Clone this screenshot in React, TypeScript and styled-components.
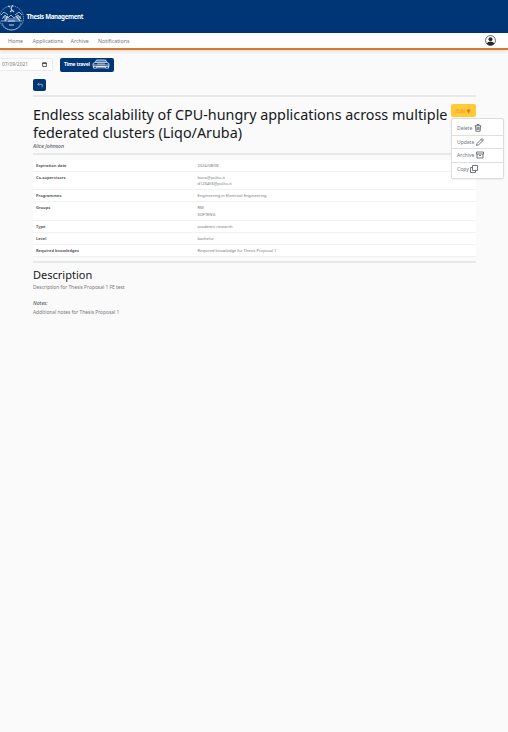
import React from "react";
import styled, { createGlobalStyle } from "styled-components";

const GlobalStyle = createGlobalStyle`
  * { box-sizing: border-box; }
  body {
    margin: 0;
    background: #fafafa;
    color: #74777a;
    font: 5px/6px "Noto Sans", sans-serif;
    overflow: hidden;
  }
`;

const Page = styled.div`
  width: 508px;
  height: 732px;
  overflow: hidden;
`;

const Header = styled.header`
  display: flex;
  align-items: center;
  height: 33px;
  background: #003576;
  color: #fff;
`;

const Brand = styled.span`
  margin-left: 1.5px;
  font-size: 6.2px;
  font-weight: 700;
  letter-spacing: -0.33px;
  line-height: 10px;
`;

const Nav = styled.nav`
  display: flex;
  align-items: center;
  height: 17px;
  padding: 0 12px 0 8px;
  background: #fff;
  border-bottom: 2px solid #d9772b;
  box-shadow: 0 1px 4px rgba(0, 0, 0, 0.15);
`;

const NavLink = styled.a<{ $width: number }>`
  width: ${(p) => p.$width}px;
  font-size: 5.3px;
  line-height: 8px;
  white-space: nowrap;
`;

const Avatar = styled.svg`
  width: 11px;
  height: 11px;
  margin-left: auto;
`;

const TimeBar = styled.div`
  display: flex;
  align-items: center;
  gap: 7px;
  margin-top: 7px;
  height: 15px;
`;

const DateField = styled.div`
  display: flex;
  align-items: center;
  justify-content: space-between;
  width: 53px;
  height: 13px;
  padding: 0 5px 1px 2px;
  background: #fff;
  border: 1px solid #e8eaec;
  border-left: 0;
  border-radius: 0 2px 2px 0;
  font-size: 4.9px;
`;

const TravelButton = styled.button`
  display: flex;
  align-items: center;
  justify-content: space-between;
  width: 54px;
  height: 14px;
  padding: 0 4px 1px;
  border: 0;
  border-radius: 2px;
  background: #003576;
  color: #fff;
  font: 700 5px/8px "Noto Sans", sans-serif;
  letter-spacing: -0.22px;
  white-space: nowrap;
  svg { flex: none; }
`;

const Content = styled.main`
  padding: 7px 32px 0 33px;
`;

const BackButton = styled.button`
  display: flex;
  align-items: center;
  justify-content: center;
  width: 13px;
  height: 12px;
  padding: 0;
  border: 0;
  border-radius: 2px;
  background: #003576;
`;

const Rule = styled.hr<{ $gap: number }>`
  height: 2px;
  margin: ${(p) => p.$gap}px 0 0;
  border: 0;
  background: #e7e8e8;
`;

const TitleRow = styled.div`
  display: flex;
  align-items: flex-start;
  justify-content: space-between;
  margin-top: 7px;
`;

const Title = styled.h1`
  margin: 2px 0 0;
  color: #15181b;
  font-size: 14.35px;
  font-weight: 400;
  line-height: 18px;
  white-space: nowrap;
`;

const EditAnchor = styled.div`
  position: relative;
  width: 25px;
`;

const EditButton = styled.button`
  display: flex;
  align-items: center;
  justify-content: center;
  gap: 1.5px;
  width: 25px;
  height: 13px;
  padding: 0;
  border: 0;
  border-radius: 2px;
  background: #ffca38;
  color: #f98e2b;
  font: 5px/8px "Noto Sans", sans-serif;
`;

const Caret = styled.span`
  font: 5.5px/8px "DejaVu Sans", sans-serif;
  color: #f5701c;
`;

const Menu = styled.div`
  position: absolute;
  top: 14px;
  left: 0;
  width: 53px;
  height: 61px;
  padding: 2px 0 4px;
  background: #fff;
  border: 1px solid #dcdddd;
  border-radius: 2px;
  box-shadow: 0 1px 2px rgba(0, 0, 0, 0.06);
`;

const MenuItem = styled.div`
  display: flex;
  align-items: center;
  gap: 1.5px;
  height: 13.5px;
  padding-left: 5px;
  font-size: 5px;
  & + & { border-top: 1px solid #dedfdf; }
  svg { width: 8px; height: 8px; }
`;

const Author = styled.div`
  margin-top: 1px;
  color: #595c60;
  font-size: 5.2px;
  font-style: italic;
  font-weight: 500;
  line-height: 6px;
`;

const Details = styled.dl`
  margin: 5px 0 0;
`;

const DetailRow = styled.div<{ $height: number }>`
  display: grid;
  grid-template-columns: 161.5px 1fr;
  height: ${(p) => p.$height}px;
  padding: 3px 3px 0;
  background: #fff;
  border-bottom: 1px solid #f0f1f1;
  font-size: 4px;
`;

const Term = styled.dt`
  color: #5b5e62;
  font-weight: 700;
`;

const Value = styled.dd<{ $line: number }>`
  margin: 0;
  line-height: 6px;
  div + div { margin-top: ${(p) => p.$line - 6}px; }
`;

const SectionTitle = styled.h2`
  margin: 4px 0 0;
  color: #15181b;
  font-size: 11px;
  font-weight: 400;
  line-height: 15px;
`;

const Paragraph = styled.p<{ $top: number }>`
  margin: ${(p) => p.$top}px 0 0;
  font-size: 4.88px;
  line-height: 6px;
`;

const NotesLabel = styled.p`
  margin: 10px 0 0;
  color: #595c60;
  font-size: 5.1px;
  font-style: italic;
  font-weight: 500;
  line-height: 6px;
`;

const Seal = () => (
  <svg width="25" height="29" viewBox="0 0 25 29" fill="none" stroke="#c7d4e5" strokeWidth="0.8">
    <circle cx="11.5" cy="16" r="12" strokeDasharray="1.5 0.7" opacity=".75" />
    <path d="M2 21a10 10 0 0 0 19 0" opacity=".7" />
    <path d="M1 13l3-3 4 3M15 13l4-3 3 3M1 19h21M2 17l3-4 3 3 3-3 3 3 4-3 3 4M4 17h16" />
    <path d="M5 19l3-5M20 19l-4-5M8 19h7M3 15h4M16 15h5" strokeWidth="1.2" />
    <path d="M8 4l2 1M13 3l-2 3 1 3M10 10l2-2 2 2M9 23h5" strokeWidth="1.1" />
  </svg>
);

const Car = () => (
  <svg width="18" height="10" viewBox="0 0 18 10" fill="none" stroke="#fff" strokeWidth=".7">
    <path d="M3 3.5L4.5 1h9L15 3.5M1 4.5l2-1h12l2 1v3H1zM1 6h16M1.5 7.5v1.7h3V7.5M13.5 7.5v1.7h3V7.5M5 7.5h8M4 2h10M5 5h8M5 8.8h8" />
  </svg>
);

const Calendar = () => (
  <svg width="5" height="5" viewBox="0 0 5 5">
    <path d="M.6 1h3.8v3.5H.6z" fill="none" stroke="#222" strokeWidth=".7" />
    <path d="M.4.6h4.2v1H.4z" fill="#222" />
  </svg>
);

const icons = {
  Delete: <path d="M1.5 3.5h13M6 3V1h4v2M3 4l.7 10.5h8.6L13 4M6 6v6M8 6v6M10 6v6" />,
  Update: <path d="M1 15l1-4L12 1l3 3L5 14l-4 1zM10 3l3 3" />,
  Archive: <path d="M1 2h14v4H1zM2 6v8h12V6M6 9h4" />,
  Copy: <path d="M5 1h10v10H5zM5 5H1v10h10v-4" />,
};

const actions: (keyof typeof icons)[] = ["Delete", "Update", "Archive", "Copy"];

const links = [
  { label: "Home", width: 24.5 },
  { label: "Applications", width: 38 },
  { label: "Archive", width: 27.5 },
  { label: "Notifications", width: 40 },
];

const details = [
  { term: "Expiration date", values: ["2024/08/06"], height: 12 },
  { term: "Co-supervisors", values: ["laura@polito.it", "d123456@polito.it"], height: 18 },
  { term: "Programmes", values: ["Engineering in Electrical Engineering"], height: 12 },
  { term: "Groups", values: ["RM", "SOFTENG"], height: 19, line: 7 },
  { term: "Type", values: ["academic research"], height: 12 },
  { term: "Level", values: ["bachelor"], height: 12 },
  { term: "Required knowledges", values: ["Required knowledge for Thesis Proposal 1"], height: 12 },
];

export default function App() {
  return (
    <Page>
      <GlobalStyle />
      <Header>
        <Seal />
        <Brand>Thesis Management</Brand>
      </Header>
      <Nav>
        {links.map((l) => (
          <NavLink key={l.label} $width={l.width}>{l.label}</NavLink>
        ))}
        <Avatar viewBox="0 0 16 16">
          <circle cx="8" cy="8" r="7.2" fill="#fff" stroke="#24272b" strokeWidth="1" />
          <circle cx="8" cy="6" r="2.9" fill="#24272b" />
          <path d="M2.5 12.5Q4 9.5 8 9.5t5.5 3Q11 15.3 8 15.3t-5.5-2.8z" fill="#24272b" />
        </Avatar>
      </Nav>
      <TimeBar>
        <DateField>07/09/2021<Calendar /></DateField>
        <TravelButton>Time travel<Car /></TravelButton>
      </TimeBar>
      <Content>
        <BackButton aria-label="Back">
          <svg width="6" height="6" viewBox="0 0 6 6" fill="none" stroke="#b8c8dc" strokeWidth=".7">
            <path d="M2.3.8L.8 2.3l1.5 1.5M.8 2.3h4.4v3" />
          </svg>
        </BackButton>
        <Rule $gap={4} />
        <TitleRow>
          <Title>
            Endless scalability of CPU-hungry applications across multiple
            <br />
            federated clusters (Liqo/Aruba)
          </Title>
          <EditAnchor>
            <EditButton>Edit<Caret>▼</Caret></EditButton>
            <Menu>
              {actions.map((name) => (
                <MenuItem key={name}>
                  {name}
                  <svg viewBox="0 0 16 16" fill="none" stroke="#4b4e52" strokeWidth="1.5">{icons[name]}</svg>
                </MenuItem>
              ))}
            </Menu>
          </EditAnchor>
        </TitleRow>
        <Author>Alice Johnson</Author>
        <Rule $gap={4} />
        <Details>
          {details.map((d) => (
            <DetailRow key={d.term} $height={d.height}>
              <Term>{d.term}</Term>
              <Value $line={d.line ?? 6}>
                {d.values.map((v) => <div key={v}>{v}</div>)}
              </Value>
            </DetailRow>
          ))}
        </Details>
        <Rule $gap={4} />
        <SectionTitle>Description</SectionTitle>
        <Paragraph $top={2}>Description for Thesis Proposal 1 FE test</Paragraph>
        <NotesLabel>Notes:</NotesLabel>
        <Paragraph $top={3}>Additional notes for Thesis Proposal 1</Paragraph>
      </Content>
    </Page>
  );
}
